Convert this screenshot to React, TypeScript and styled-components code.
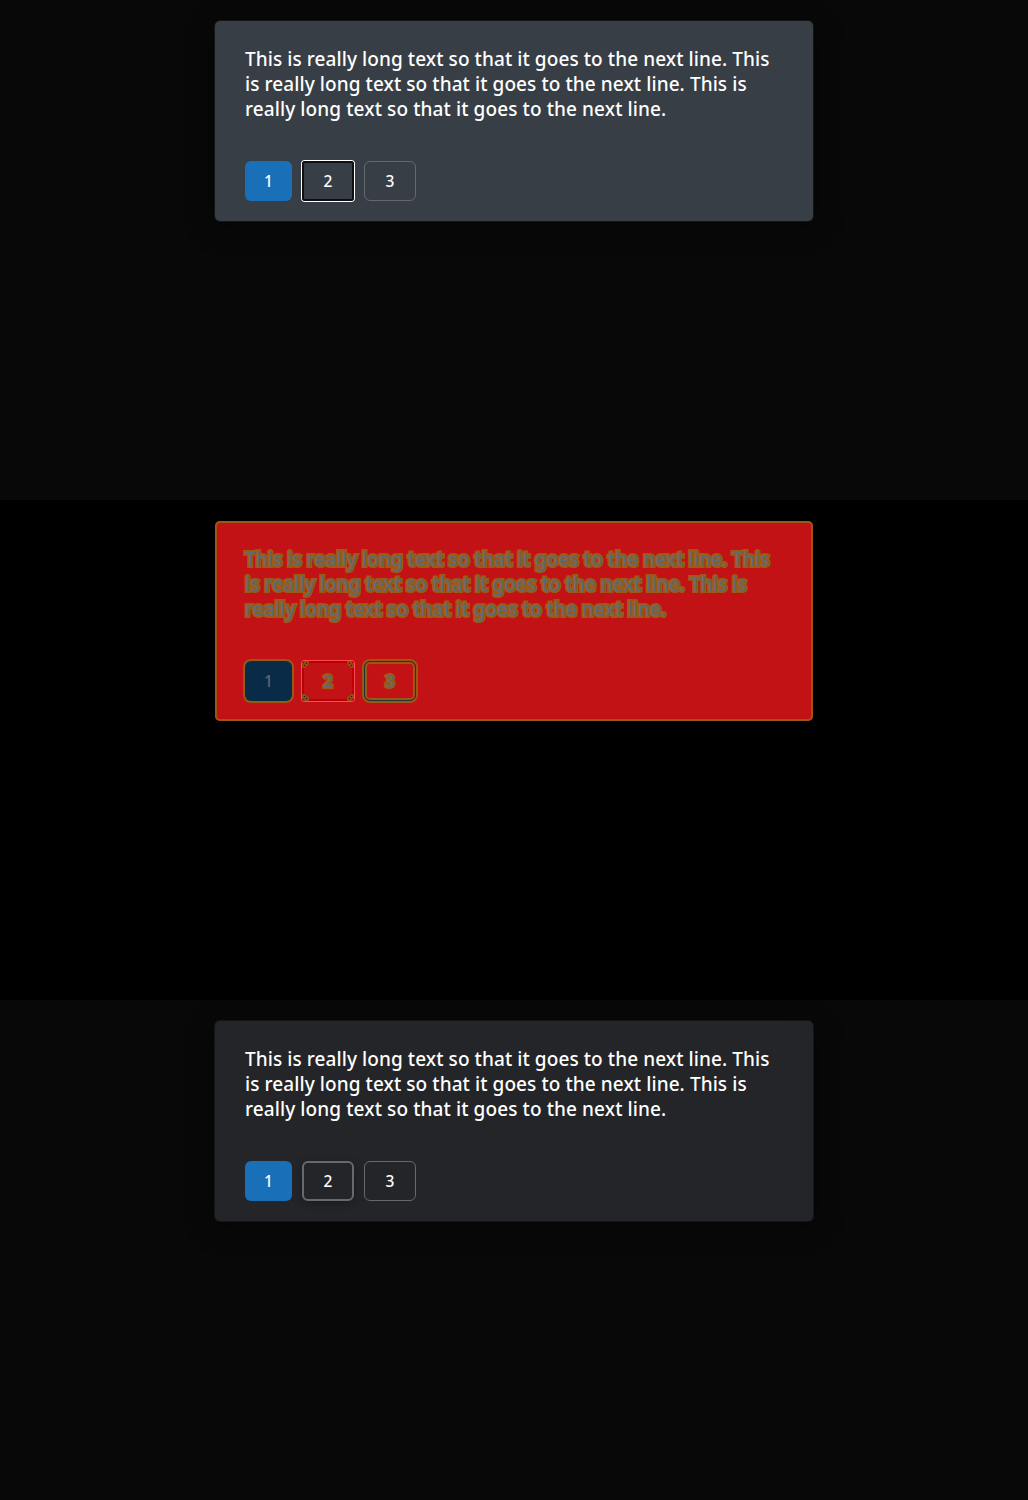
import React from "react";
import styled, { createGlobalStyle, css } from "styled-components";

type Variant = "slate" | "diff" | "dark";
type Kind = "primary" | "focused" | "outline";

const GlobalStyle = createGlobalStyle`
  *, *::before, *::after { box-sizing: border-box; }
  html, body { margin: 0; padding: 0; background: #080808; }
`;

const Page = styled.main`
  display: flex;
  flex-direction: column;
  width: 1028px;
  font-family: "Noto Sans", "Open Sans", sans-serif;
`;

const Panel = styled.section<{ $variant: Variant }>`
  display: flex;
  justify-content: center;
  align-items: flex-start;
  height: 500px;
  padding-top: 21px;
  overflow: hidden;
  background: ${(p) => (p.$variant === "diff" ? "#000000" : "#080808")};
`;

const cardSkins = {
  slate: css`
    background: #373e45;
    box-shadow: 0 0 0 1px rgba(34, 36, 38, 0.5), 0 4px 30px rgba(0, 0, 0, 0.4);
  `,
  diff: css`
    background: #c31215;
    box-shadow: inset 0 0 0 2px #9b5614;
  `,
  dark: css`
    background: #242528;
    box-shadow: 0 0 0 1px rgba(34, 36, 38, 0.5), 0 4px 30px rgba(0, 0, 0, 0.4);
  `,
};

const Card = styled.article<{ $variant: Variant }>`
  display: flex;
  flex-direction: column;
  justify-content: space-between;
  width: 598px;
  height: 200px;
  padding: 26px 30px 20px;
  border-radius: 5px;
  ${(p) => cardSkins[p.$variant]}
`;

const outlined = css`
  color: #5f6a76;
  -webkit-text-stroke: 4px #9b5b17;
  paint-order: stroke fill;
`;

const Message = styled.p<{ $variant: Variant }>`
  margin: 0;
  color: #fff;
  font-size: 19px;
  font-weight: 500;
  line-height: 25px;
  ${(p) => p.$variant === "diff" && outlined}
`;

const Line = styled.span<{ $spacing: number }>`
  display: block;
  width: max-content;
  white-space: nowrap;
  letter-spacing: ${(p) => p.$spacing}px;
`;

const Actions = styled.div`
  display: flex;
  gap: 10px;
`;

const plainKinds = {
  primary: css`
    background: #1970b9;
  `,
  focused: css``,
  outline: css`
    border: 1px solid #646970;
  `,
};

const diffKinds = {
  primary: css`
    color: #63636b;
    background: #0a2b48;
    box-shadow: 0 0 0 2px #985914;
  `,
  focused: css`
    ${outlined}
    box-shadow: 0 0 0 1px #ff4850, inset 0 0 0 2px #b90006;
    border-radius: 3px;
  `,
  outline: css`
    ${outlined}
    border: 1px solid #263039;
    box-shadow: 0 0 0 2px #985914, inset 0 0 0 2px #985914;
  `,
};

const focusSkins = {
  slate: css`
    border-radius: 3px;
    box-shadow: 0 0 0 1px #fff, inset 0 0 0 2px #0e0f12;
  `,
  diff: css``,
  dark: css`
    border: 2px solid #646a6f;
    box-shadow: 0 2px 10px rgba(0, 0, 0, 0.3);
  `,
};

const Button = styled.button<{ $variant: Variant; $kind: Kind }>`
  display: flex;
  position: relative;
  align-items: center;
  justify-content: center;
  width: ${(p) => (p.$kind === "primary" ? 47 : 52)}px;
  height: 40px;
  padding: 0;
  border: 0;
  border-radius: 6px;
  background: transparent;
  color: #fff;
  font: 500 15.5px/24px "Noto Sans", sans-serif;
  ${(p) => (p.$variant === "diff" ? diffKinds[p.$kind] : plainKinds[p.$kind])}
  ${(p) => p.$kind === "focused" && focusSkins[p.$variant]}
`;

const Corner = styled.svg<{ $x: "left" | "right"; $y: "top" | "bottom" }>`
  position: absolute;
  ${(p) => p.$x}: -1px;
  ${(p) => p.$y}: -1px;
  transform: scale(${(p) => (p.$x === "right" ? -1 : 1)}, ${(p) => (p.$y === "bottom" ? -1 : 1)});
`;

const CornerMark = ({ x, y }: { x: "left" | "right"; y: "top" | "bottom" }) => (
  <Corner $x={x} $y={y} width="8" height="8" viewBox="0 0 8 8" shapeRendering="crispEdges" aria-hidden>
    <path d="M3 1h5v4h-1v1h-2v2h-4v-5h2z" fill="#8d4d12" />
    <path d="M5 3h1v1h-1zM3 5h1v1h-1z" fill="#17110d" />
  </Corner>
);

const lines = [
  { text: "This is really long text so that it goes to the next line. This", spacing: 0.08 },
  { text: "is really long text so that it goes to the next line. This is", spacing: 0.08 },
  { text: "really long text so that it goes to the next line.", spacing: 0.1 },
];

const kinds: Kind[] = ["primary", "focused", "outline"];
const variants: Variant[] = ["slate", "diff", "dark"];

export default function App() {
  return (
    <>
      <GlobalStyle />
      <Page>
        {variants.map((variant) => (
          <Panel key={variant} $variant={variant}>
            <Card $variant={variant}>
              <Message $variant={variant}>
                {lines.map((line) => (
                  <Line key={line.text} $spacing={line.spacing}>{line.text}</Line>
                ))}
              </Message>
              <Actions>
                {kinds.map((kind, i) => (
                  <Button key={kind} type="button" $variant={variant} $kind={kind}>
                    {i + 1}
                    {variant === "diff" && kind === "focused" && (
                      <>
                        <CornerMark x="left" y="top" />
                        <CornerMark x="right" y="top" />
                        <CornerMark x="left" y="bottom" />
                        <CornerMark x="right" y="bottom" />
                      </>
                    )}
                  </Button>
                ))}
              </Actions>
            </Card>
          </Panel>
        ))}
      </Page>
    </>
  );
}
